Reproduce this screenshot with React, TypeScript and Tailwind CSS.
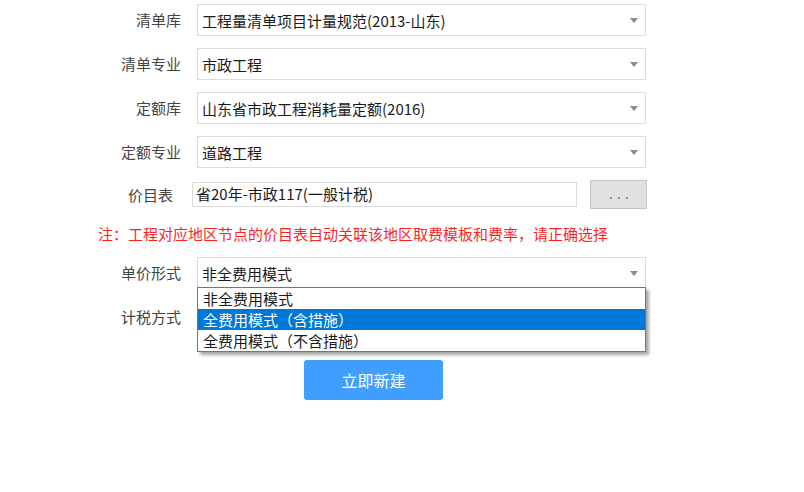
import React from 'react';

const font = { fontFamily: '"Noto Sans CJK SC", "Noto Sans", sans-serif' };

const Arrow: React.FC = () => (
    <svg width="8" height="5" viewBox="0 0 8 5" className="shrink-0">
        <path d="M0 0 H8 L4 5 Z" fill="#8a8a8a" />
    </svg>
);

const SelectBox: React.FC<{ value: string }> = ({ value }) => (
    <div className="w-[449px] h-[32px] border border-[#dcdcdc] bg-white flex items-center pl-[4px] pr-[7px]">
        <span className="flex-1 text-[15px] text-[#1a1a1a] leading-none whitespace-nowrap">{value}</span>
        <Arrow />
    </div>
);

const Row: React.FC<{ label: string; value: string; className?: string; children?: React.ReactNode }> = ({
    label,
    value,
    className = '',
    children,
}) => (
    <div className={`flex items-center h-[32px] ${className}`}>
        <div className="w-[181px] text-right text-[15px] text-[#444] whitespace-nowrap">{label}</div>
        <div className="ml-[16px] relative">
            <SelectBox value={value} />
            {children}
        </div>
    </div>
);

const options = ['非全费用模式', '全费用模式（含措施）', '全费用模式（不含措施）'];

const App: React.FC = () => {
    const selected = 1;

    return (
        <div className="w-[804px] h-[492px] bg-white overflow-hidden pt-[4px]" style={font}>
            <Row label="清单库" value="工程量清单项目计量规范(2013-山东)" />
            <Row label="清单专业" value="市政工程" className="mt-[12px]" />
            <Row label="定额库" value="山东省市政工程消耗量定额(2016)" className="mt-[12px]" />
            <Row label="定额专业" value="道路工程" className="mt-[12px]" />

            <div className="flex items-start h-[30px] mt-[12px]">
                <div className="w-[173px] text-right text-[15px] text-[#444] leading-[30px]">价目表</div>
                <div className="ml-[19px] mt-[2px] w-[385px] h-[25px] border border-[#dcdcdc] flex items-center pl-[3px] text-[15px] text-[#1a1a1a] whitespace-nowrap">
                    省20年-市政117(一般计税)
                </div>
                <button className="ml-[13px] w-[57px] h-[29px] bg-[#e1e1e1] border border-[#c4c4c4] flex items-end justify-center gap-[6px] pb-[9px]">
                    <span className="w-[2px] h-[2px] bg-[#8a8a8a]" />
                    <span className="w-[2px] h-[2px] bg-[#8a8a8a]" />
                    <span className="w-[2px] h-[2px] bg-[#8a8a8a]" />
                </button>
            </div>

            <div className="mt-[14px] h-[20px] leading-[20px] pl-[98px] text-[15px] text-[#ff1f1f] whitespace-nowrap">
                注：工程对应地区节点的价目表自动关联该地区取费模板和费率，请正确选择
            </div>

            <Row label="单价形式" value="非全费用模式" className="mt-[13px] relative z-10">
                <ul className="absolute left-0 top-[30px] w-[449px] bg-white border border-[#767676] shadow-[3px_3px_3px_rgba(0,0,0,0.35)]">
                    {options.map((opt, i) => (
                        <li
                            key={opt}
                            className={`h-[21px] leading-[21px] pl-[5px] text-[15px] whitespace-nowrap ${
                                i === selected ? 'bg-[#0078d7] text-white' : 'text-[#1a1a1a]'
                            }`}
                        >
                            {opt}
                        </li>
                    ))}
                </ul>
            </Row>
            {/* covered by the open list above */}
            <Row label="计税方式" value="" className="mt-[12px]" />

            <div className="mt-[27px] pl-[304px]">
                <button className="w-[139px] h-[40px] rounded-[3px] bg-[#409eff] text-white text-[16px]">立即新建</button>
            </div>
        </div>
    );
};

export default App;
